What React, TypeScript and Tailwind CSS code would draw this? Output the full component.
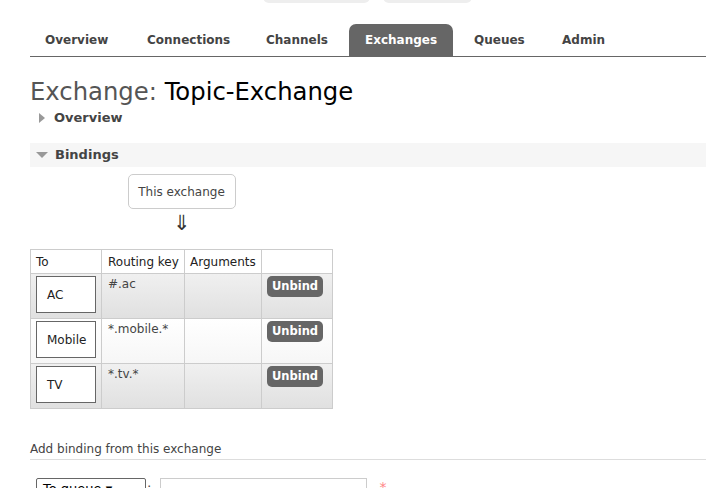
import React from "react";

const font = { fontFamily: '"DejaVu Sans", Verdana, sans-serif' };

function Row({ to, rk, alt }: { to: string; rk: string; alt?: boolean }) {
  const bg = alt
    ? "bg-gradient-to-b from-[#ffffff] to-[#f6f6f6]"
    : "bg-gradient-to-b from-[#f0f0f0] to-[#e0e0e0]";
  return (
    <tr className={`${bg} h-[45px]`}>
      <td className="border border-[#ccc] p-0 align-top pl-[5px] pt-[2px]">
        <div className="w-[60px] h-[37px] border border-[#666] bg-white flex items-center pl-[10px] text-[12px] text-[#222]">
          {to}
        </div>
      </td>
      <td className="border border-[#ccc] align-top pl-[6px] pt-[1px] text-[12px] text-[#444]">{rk}</td>
      <td className="border border-[#ccc]"></td>
      <td className="border border-[#ccc] align-top pl-[5px] pt-[2px]">
        <span className="inline-flex items-center justify-center w-[56px] h-[21px] rounded-[5px] bg-[#666] text-white font-bold text-[11.5px]">
          Unbind
        </span>
      </td>
    </tr>
  );
}

export default function App() {
  const tabs: [string, string][] = [
    ["Overview", "w-[102px]"],
    ["Connections", "w-[119px]"],
    ["Channels", "w-[83px]"],
    ["Exchanges", ""],
    ["Queues", "w-[88px]"],
    ["Admin", "w-[60px]"],
  ];
  return (
    <div className="w-[706px] h-[488px] overflow-hidden bg-white relative text-[#444]" style={font}>
      <div className="absolute top-[-10px] left-[263px] w-[107px] h-[13px] rounded-[6px] bg-[#eee]"></div>
      <div className="absolute top-[-10px] left-[383px] w-[89px] h-[13px] rounded-[6px] bg-[#eee]"></div>

      <div className="pl-[30px] pt-[24px]">
        <div className="flex items-end border-b border-[#666] h-[33px] pl-[15px] text-[12px] font-bold text-[#444]">
          {tabs.map(([t, w]) =>
            t === "Exchanges" ? (
              <div key={t} className="h-[32px] w-[104px] justify-center flex items-center bg-[#666] text-white rounded-t-[7px] mr-[21px]">
                {t}
              </div>
            ) : (
              <div key={t} className={`h-[32px] flex items-center ${w}`}>
                {t}
              </div>
            )
          )}
        </div>

        <h1 className="mt-[20px] text-[24.3px] leading-[30px] text-[#555] font-normal">
          Exchange: <span className="text-black">Topic-Exchange</span>
        </h1>

        <div className="flex items-center h-[20px] mt-[1px] pl-[9px] text-[13px] font-bold text-[#444]">
          <span className="w-0 h-0 border-y-[5px] border-y-transparent border-l-[6px] border-l-[#999] mr-[9px]"></span>
          Overview
        </div>

        <div className="mt-[15px] h-[24px] bg-[#f6f6f6] flex items-center pl-[6px] text-[13px] font-bold text-[#444]">
          <span className="w-0 h-0 border-x-[6px] border-x-transparent border-t-[6px] border-t-[#999] mr-[7px]"></span>
          Bindings
        </div>

        <div className="w-[303px] flex flex-col items-center mt-[7px]">
          <div className="w-[108px] h-[35px] border border-[#ccc] rounded-[5px] flex items-center justify-center text-[12px] text-[#444]">
            This exchange
          </div>
          <div className="text-[21px] leading-[24px] text-[#333] mt-[2px]">⇓</div>
        </div>

        <table className="mt-[14px] border-collapse w-[303px] text-[12px]">
          <thead>
            <tr className="h-[24px] bg-white">
              <th className="border border-[#ccc] font-normal text-left pl-[5px] w-[71px] text-[#222]">To</th>
              <th className="border border-[#ccc] font-normal text-left pl-[6px] w-[83px] text-[#222]">Routing key</th>
              <th className="border border-[#ccc] font-normal text-left pl-[5px] w-[77px] text-[#222]">Arguments</th>
              <th className="border border-[#ccc]"></th>
            </tr>
          </thead>
          <tbody>
            <Row to="AC" rk="#.ac" />
            <Row to="Mobile" rk="*.mobile.*" alt />
            <Row to="TV" rk="*.tv.*" />
          </tbody>
        </table>

        <div className="mt-[32px] text-[12px] leading-[16px] text-[#444] border-b border-[#ddd] pb-[2px]">
          Add binding from this exchange
        </div>

        <div className="flex items-start mt-[18px]">
          <div className="ml-[6px] w-[110px] h-[20px] border border-[#666] rounded-[2px] text-[13px] text-black pl-[6px] leading-[20px] overflow-hidden">
            To queue ▾
          </div>
          <span className="ml-[1px] text-[13px]">:</span>
          <div className="ml-[9px] w-[207px] h-[22px] border border-[#ccc]"></div>
          <span className="ml-[12px] text-[#f88] text-[14px] leading-[18px]">*</span>
        </div>
      </div>
    </div>
  );
}
